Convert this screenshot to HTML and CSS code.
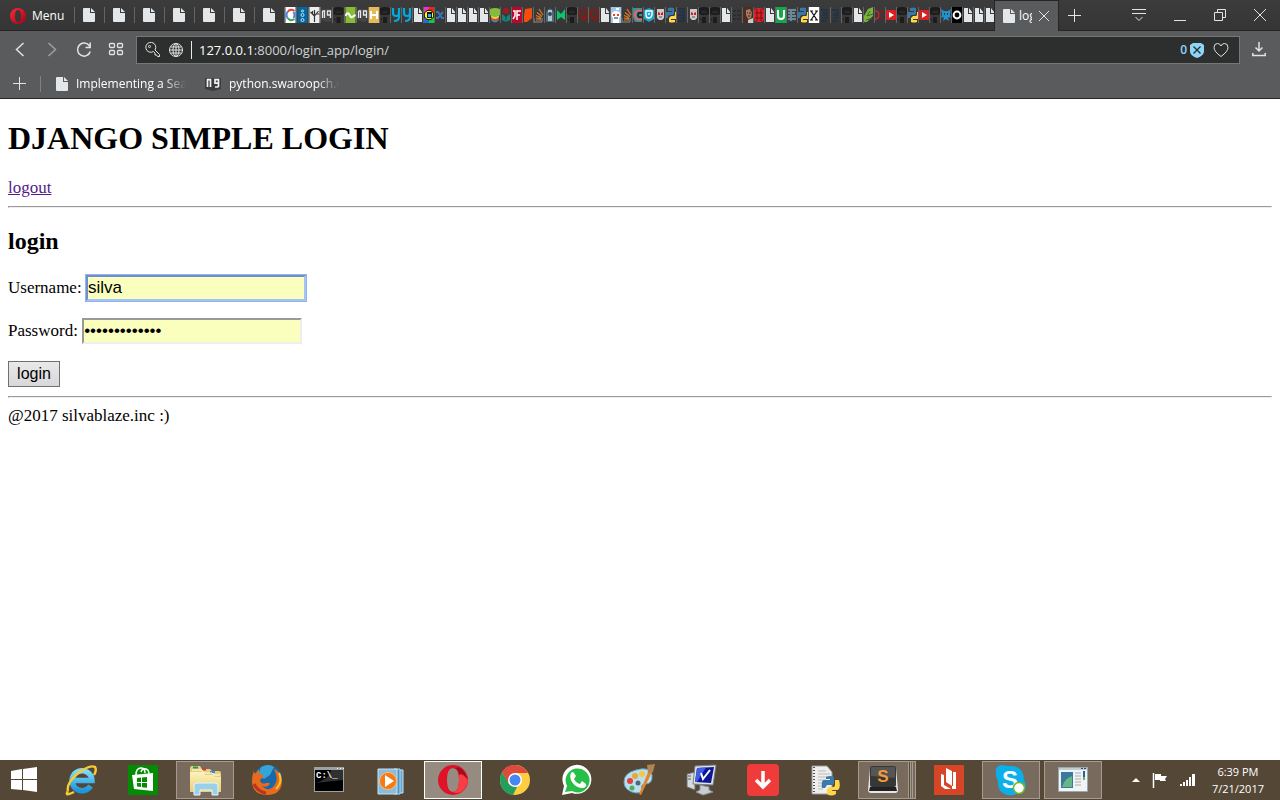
FILE: index.html
```html
<!DOCTYPE html>
<html lang="en">
<head>
<meta charset="utf-8">
<meta name="viewport" content="width=device-width, initial-scale=1">
<title>login</title>
<link rel="stylesheet" href="styles.css">
</head>
<body>
<svg class="sprites" aria-hidden="true">
  <defs>
    <linearGradient id="opera-g" x1="0" y1="0" x2="1" y2="1"><stop offset="0" stop-color="#ff2b3a"/><stop offset="1" stop-color="#a30014"/></linearGradient>
    <linearGradient id="folder-g" x1="0" y1="0" x2="0" y2="1"><stop offset="0" stop-color="#fdf3bd"/><stop offset="1" stop-color="#e9cf74"/></linearGradient>
    <linearGradient id="ie-g" x1="0" y1="0" x2="0" y2="1"><stop offset="0" stop-color="#7fdcfb"/><stop offset="1" stop-color="#1c96dd"/></linearGradient>
  </defs>
  <symbol id="page" viewBox="0 0 12 14"><path d="M1 0h6v5h5v8q0 1-1 1H1q-1 0-1-1V1q0-1 1-1z" fill="#e3e7ea"/><path d="M8 0l4 4H8z" fill="#e3e7ea"/></symbol>
  <symbol id="f-doc" viewBox="0 0 10 16"><path d="M1 1h4v6h4v8H1z" fill="#e3e7ea"/><path d="M6 1l3 4v1H6z" fill="#e3e7ea"/></symbol>
  <symbol id="f-dark" viewBox="0 0 10 16"><path d="M0 1q5-2 10 0v6q-1 1-3 1H3Q1 8 0 7z" fill="#1c1c1d"/><path d="M2 4q3-1 6 0v2q-3 1-6 0z" fill="#29292a"/><path d="M3 10h4v6H3zM0 11l2 1v2z" fill="#1c1c1d"/></symbol>
  <symbol id="f-google" viewBox="0 0 10 16"><path fill="#fff" d="M0 0h10v16H0z"/><path d="M9 4Q5 1 2 5" fill="none" stroke="#e84335" stroke-width="2"/><path d="M2 11q3 4 7 1" fill="none" stroke="#36a852" stroke-width="2"/><path d="M2 5q-2 3 0 6M8 5q2 3 0 6" fill="none" stroke="#4285f4" stroke-width="2"/></symbol>
  <symbol id="f-blue" viewBox="0 0 10 16"><path fill="#07669b" d="M0 0h10v16H0z"/><g fill="none" stroke="#b7e6ff"><circle cx="5" cy="4" r="1"/><circle cx="5" cy="8" r="1.5"/><circle cx="5" cy="13" r="1.5"/></g></symbol>
  <symbol id="f-tree" viewBox="0 0 10 16"><path fill="#eee" d="M0 0h10v16H0z"/><path d="M5 15V8M5 9L1 5M5 9l4-5M5 8V3M3 7V4M7 7h3" fill="none" stroke="#333" stroke-width="1.2"/></symbol>
  <symbol id="f-book" viewBox="0 0 10 16"><path fill="#454545" d="M0 2h10v12l-4 1-6-2z"/><path d="M1 4v7M1 4h2v7M9 11V4H6v4h3" fill="none" stroke="#e7e7e7" stroke-width="1.3"/></symbol>
  <symbol id="f-green" viewBox="0 0 10 16"><path fill="#86bd35" d="M0 0h10v16H0z"/><path d="M0 9q2-5 4-1 2 4 4 1l2-1" fill="none" stroke="#fff" stroke-width="2"/></symbol>
  <symbol id="f-y" viewBox="0 0 10 16"><path d="M2 1v5q0 3 3 3 3 0 3-3V1v9q0 4-5 4" fill="none" stroke="#00a9e0" stroke-width="2.2"/></symbol>
  <symbol id="f-rainbow" viewBox="0 0 10 16"><path fill="#f32dcb" d="M0 0h5v8H0z"/><path fill="#e52525" d="M5 0h5v8H5z"/><path fill="#1c6ce8" d="M0 8h5v8H0z"/><path fill="#14c84b" d="M5 8h5v8H5z"/><circle cx="5" cy="8" r="4.8" fill="#ff0" stroke="#000"/><path fill="#111" d="M3 5h5v6H3z"/><path fill="#3ca2ff" d="M4 7h3v3H4z"/></symbol>
  <symbol id="f-x" viewBox="0 0 10 16"><path d="M1 5h2l4 6h2M1 11h2l5-6" fill="none" stroke="#3a72b8" stroke-width="2"/></symbol>
  <symbol id="f-stackbooks" viewBox="0 0 10 16"><path fill="#2b8fc4" d="M1 11h8v2q-4 5-8 0z"/><path fill="#e0443b" d="M1 9h8v3q-4 4-8 0z"/><path fill="#efd530" d="M1 8h8v2q-4 4-8 0z"/><path fill="#83bd3b" d="M0 2q5-2 10 0v6q-5 4-10 0z"/></symbol>
  <symbol id="f-rose" viewBox="0 0 10 16"><path fill="#188179" d="M1 7l4 3 4-3v6q-4 3-8 0z"/><circle cx="5" cy="4" r="3.2" fill="#a01824"/><path d="M5 6v7" stroke="#17483f"/></symbol>
  <symbol id="f-rr" viewBox="0 0 10 16"><path fill="#b9082f" d="M0 0h10v16H0z"/><path d="M1 4h2v5l-2 3M5 13V4h4M5 8h3" fill="none" stroke="#fff" stroke-width="1.5"/></symbol>
  <symbol id="f-orange" viewBox="0 0 10 16"><path fill="#f64c0c" d="M2 2l7-1v10l-5 4H1V9z"/></symbol>
  <symbol id="f-so" viewBox="0 0 10 16"><path d="M0 11v4h8v-4" fill="none" stroke="#8d8d8d"/><path d="M2 13h5M2 11l5 .6M2 8.500l5 2M3 5.500l5 4M5 2l4 6" fill="none" stroke="#e27a21" stroke-width="1.2"/></symbol>
  <symbol id="f-robot" viewBox="0 0 10 16"><path fill="#486d83" d="M1 5q4-7 8 0v10H1z"/><path fill="#b6c4cc" d="M3 3h4v11H3z"/><circle cx="5" cy="7" r="2" fill="#2e4757"/></symbol>
  <symbol id="f-m" viewBox="0 0 10 16"><path fill="#05c76b" d="M1 3l4 4 4-5v11l-4-3-4 3z"/></symbol>
  <symbol id="f-q" viewBox="0 0 10 16"><ellipse cx="5" cy="7" rx="3.4" ry="4.6" fill="none" stroke="#8e170f" stroke-width="1.8"/><path d="M4 9q3 0 3 4h2" fill="none" stroke="#8e170f" stroke-width="1.5"/></symbol>
  <symbol id="f-reddit" viewBox="0 0 10 16"><path fill="#9cc8ee" d="M0 0h10v16H0z"/><ellipse cx="5" cy="8" rx="4.5" ry="4" fill="#fff"/><path fill="#fff" d="M2 11h6v5H2zM5 1h3v2H5z"/><path fill="#f33d16" d="M2 7h2v2H2zM6 7h2v2H6z"/><path d="M3 11h4" stroke="#222"/></symbol>
  <symbol id="f-c" viewBox="0 0 10 16"><path fill="#408da0" d="M0 1h9v14H2q-3-4-2-14z"/><path d="M9 4Q2 2 2 8t7 4" fill="none" stroke="#e26b59" stroke-width="2"/><path d="M9 6Q5 5 5 8t4 2" fill="none" stroke="#252525" stroke-width="2"/></symbol>
  <symbol id="f-hex" viewBox="0 0 10 16"><path fill="#1aa5cc" d="M0 3l5-2 5 2v9l-5 3-5-3z"/><path d="M2 4h6v4q-1 3-3 3-3 0-3-3zM4 7h2" fill="none" stroke="#fff" stroke-width="1.4"/></symbol>
  <symbol id="f-face" viewBox="0 0 10 16"><path fill="#cacaca" d="M2 2h7v9l-2 2H4l-2-2z"/><path fill="#db1822" d="M3 5l2 1v2H3zM8 5L6 6v2h2z"/><path d="M4 10h3" stroke="#555"/></symbol>
  <symbol id="f-python" viewBox="0 0 10 16"><path fill="#3877aa" d="M2 1q3-1 6 0v6L7 8H4q-2 0-2 3H0V5h6V4H2z"/><path fill="#ffd747" d="M9 5h1v7H5v1h4v2q-3 1-6 0v-4l2-2h3l1-1z"/></symbol>
  <symbol id="f-navy" viewBox="0 0 10 16"><path d="M1 2h6M2 5h6M1 8h6M2 11h6M1 14h6M7 1v14" stroke="#1e304e" stroke-width="1.4"/></symbol>
  <symbol id="f-faint" viewBox="0 0 10 16"><path d="M1 4h3M5 4h4M1 8h3M5 8h4M1 12h3M5 12h4" stroke="#292f31" stroke-width="2"/></symbol>
  <symbol id="f-photo" viewBox="0 0 10 16"><path fill="#4a2c22" d="M0 0h10v16H0z"/><path fill="#a87a5e" d="M3 3l4-1 2 4-1 5-3 1-2-4z"/><path fill="#c9c9c9" d="M5 13l5-2v5H5z"/><path d="M4 6h1M6 6h2M5 9h2" stroke="#3f211a"/></symbol>
  <symbol id="f-red" viewBox="0 0 10 16"><rect x="0" y="1" width="10" height="14" rx="4" fill="#e32028"/><path d="M3 2v12M7 2v12M1 6h8M1 11h8" stroke="#6d1519"/></symbol>
  <symbol id="f-u" viewBox="0 0 10 16"><path fill="#16a74b" d="M0 0h10v16H0z"/><path d="M2 3v6q0 3 3 3t3-3V3" fill="none" stroke="#fff" stroke-width="2"/></symbol>
  <symbol id="f-lines" viewBox="0 0 10 16"><path fill="#2d4351" d="M0 1h9v14H0z"/><path d="M1 3h2M1 6h2M1 9h2M1 12h2M5 3h4M5 6h3M5 9h4M5 12h4M4 2v12" stroke="#b8cbd5"/></symbol>
  <symbol id="f-xw" viewBox="0 0 10 16"><path fill="#fff" d="M0 0h10v16H0z"/><path d="M2 4l6 9M8 4l-6 9M1 4h3M6 4h3M1 13h3M6 13h3" stroke="#111" stroke-width="1.2"/></symbol>
  <symbol id="f-bluelines" viewBox="0 0 10 16"><path d="M1 3h6v3H3M2 8h5v3H2M1 14h6" fill="none" stroke="#1d3548" stroke-width="1.4"/></symbol>
  <symbol id="f-leaf" viewBox="0 0 10 16"><path fill="#7ab23b" d="M9 0v9l-6 6H0V9l4-7z"/><path d="M9 7L3 9l3-5M2 13l6-2" fill="none" stroke="#3e672d"/></symbol>
  <symbol id="f-cross" viewBox="0 0 10 16"><path d="M0 4q4 0 4 4t-4 4" fill="none" stroke="#d0222b" stroke-width="1.6"/><path d="M9 4Q5 4 5 8t4 4" fill="none" stroke="#792127" stroke-width="1.3"/></symbol>
  <symbol id="f-yt" viewBox="0 0 10 16"><rect x="0" y="3" width="10" height="10" rx="1" fill="#d91f22"/><path fill="#fff" d="M3 5l5 3-5 3z"/></symbol>
  <symbol id="f-fox" viewBox="0 0 10 16"><path fill="#2391ce" d="M0 2l3 2h4l3-2-1 6 1 3-3-1 1 4-3-2-3 2 1-4-3 1 1-3z"/><path fill="#153e58" d="M3 6h1v2H3zM6 6h1v2H6z"/></symbol>
  <symbol id="f-o" viewBox="0 0 10 16"><path fill="#000" d="M0 0h10v16H0z"/><circle cx="5" cy="8" r="3.4" fill="none" stroke="#fff" stroke-width="2"/></symbol>
</svg>

<header class="browser">
  <nav class="tabs" aria-label="Tabs">
    <button class="menu"><svg width="16" height="16" viewBox="0 0 16 16"><path fill-rule="evenodd" fill="url(#opera-g)" d="M8 0a8 8 0 100 16A8 8 0 008 0zm0 2q3 0 3 6t-3 6-3-6 3-6z"/></svg>Menu</button>
    <button class="tab" aria-label="Tab"><svg width="12" height="14"><use href="#page"/></svg></button>
    <button class="tab" aria-label="Tab"><svg width="12" height="14"><use href="#page"/></svg></button>
    <button class="tab" aria-label="Tab"><svg width="12" height="14"><use href="#page"/></svg></button>
    <button class="tab" aria-label="Tab"><svg width="12" height="14"><use href="#page"/></svg></button>
    <button class="tab" aria-label="Tab"><svg width="12" height="14"><use href="#page"/></svg></button>
    <button class="tab" aria-label="Tab"><svg width="12" height="14"><use href="#page"/></svg></button>
    <button class="tab" aria-label="Tab"><svg width="12" height="14"><use href="#page"/></svg></button>
    <button class="mini wide" aria-label="Tab"><svg><use href="#f-google"/></svg></button>
    <button class="mini wide" aria-label="Tab"><svg><use href="#f-blue"/></svg></button>
    <button class="mini wide" aria-label="Tab"><svg><use href="#f-tree"/></svg></button>
    <button class="mini wide" aria-label="Tab"><svg><use href="#f-book"/></svg></button>
    <button class="mini wide" aria-label="Tab"><svg><use href="#f-dark"/></svg></button>
    <button class="mini wide" aria-label="Tab"><svg><use href="#f-green"/></svg></button>
    <button class="mini wide" aria-label="Tab"><svg><use href="#f-book"/></svg></button>
    <button class="mini" aria-label="Tab"><svg viewBox="0 0 10 16"><path fill="#e8b955" d="M0 0h10v16H0z"/><path d="M2 4v8M8 4v8M2 8h6" stroke="#fff" stroke-width="2"/></svg></button>
    <button class="mini" aria-label="Tab"><svg><use href="#f-dark"/></svg></button>
    <button class="mini" aria-label="Tab"><svg><use href="#f-y"/></svg></button>
    <button class="mini" aria-label="Tab"><svg><use href="#f-y"/></svg></button>
    <button class="mini" aria-label="Tab"><svg><use href="#f-doc"/></svg></button>
    <button class="mini" aria-label="Tab"><svg><use href="#f-rainbow"/></svg></button>
    <button class="mini" aria-label="Tab"><svg><use href="#f-x"/></svg></button>
    <button class="mini" aria-label="Tab"><svg><use href="#f-doc"/></svg></button>
    <button class="mini" aria-label="Tab"><svg><use href="#f-doc"/></svg></button>
    <button class="mini" aria-label="Tab"><svg><use href="#f-doc"/></svg></button>
    <button class="mini" aria-label="Tab"><svg><use href="#f-doc"/></svg></button>
    <button class="mini" aria-label="Tab"><svg><use href="#f-stackbooks"/></svg></button>
    <button class="mini" aria-label="Tab"><svg><use href="#f-rose"/></svg></button>
    <button class="mini" aria-label="Tab"><svg><use href="#f-rr"/></svg></button>
    <button class="mini" aria-label="Tab"><svg><use href="#f-orange"/></svg></button>
    <button class="mini" aria-label="Tab"><svg><use href="#f-so"/></svg></button>
    <button class="mini" aria-label="Tab"><svg><use href="#f-robot"/></svg></button>
    <button class="mini" aria-label="Tab"><svg><use href="#f-m"/></svg></button>
    <button class="mini" aria-label="Tab"><svg><use href="#f-dark"/></svg></button>
    <button class="mini" aria-label="Tab"><svg><use href="#f-q"/></svg></button>
    <button class="mini" aria-label="Tab"><svg><use href="#f-q"/></svg></button>
    <button class="mini" aria-label="Tab"><svg><use href="#f-doc"/></svg></button>
    <button class="mini" aria-label="Tab"><svg><use href="#f-reddit"/></svg></button>
    <button class="mini" aria-label="Tab"><svg><use href="#f-so"/></svg></button>
    <button class="mini" aria-label="Tab"><svg><use href="#f-c"/></svg></button>
    <button class="mini" aria-label="Tab"><svg><use href="#f-hex"/></svg></button>
    <button class="mini" aria-label="Tab"><svg><use href="#f-face"/></svg></button>
    <button class="mini" aria-label="Tab"><svg><use href="#f-python"/></svg></button>
    <button class="mini" aria-label="Tab"><svg><use href="#f-navy"/></svg></button>
    <button class="mini" aria-label="Tab"><svg><use href="#f-face"/></svg></button>
    <button class="mini" aria-label="Tab"><svg><use href="#f-dark"/></svg></button>
    <button class="mini" aria-label="Tab"><svg><use href="#f-dark"/></svg></button>
    <button class="mini" aria-label="Tab"><svg><use href="#f-doc"/></svg></button>
    <button class="mini" aria-label="Tab"><svg><use href="#f-faint"/></svg></button>
    <button class="mini" aria-label="Tab"><svg><use href="#f-photo"/></svg></button>
    <button class="mini" aria-label="Tab"><svg><use href="#f-red"/></svg></button>
    <button class="mini" aria-label="Tab"><svg><use href="#f-doc"/></svg></button>
    <button class="mini" aria-label="Tab"><svg><use href="#f-u"/></svg></button>
    <button class="mini" aria-label="Tab"><svg><use href="#f-lines"/></svg></button>
    <button class="mini" aria-label="Tab"><svg><use href="#f-python"/></svg></button>
    <button class="mini" aria-label="Tab"><svg><use href="#f-xw"/></svg></button>
    <button class="mini" aria-label="Tab"><svg><use href="#f-bluelines"/></svg></button>
    <button class="mini" aria-label="Tab"><svg><use href="#f-bluelines"/></svg></button>
    <button class="mini" aria-label="Tab"><svg><use href="#f-dark"/></svg></button>
    <button class="mini" aria-label="Tab"><svg><use href="#f-doc"/></svg></button>
    <button class="mini" aria-label="Tab"><svg><use href="#f-leaf"/></svg></button>
    <button class="mini" aria-label="Tab"><svg><use href="#f-cross"/></svg></button>
    <button class="mini" aria-label="Tab"><svg><use href="#f-yt"/></svg></button>
    <button class="mini" aria-label="Tab"><svg><use href="#f-dark"/></svg></button>
    <button class="mini" aria-label="Tab"><svg><use href="#f-python"/></svg></button>
    <button class="mini" aria-label="Tab"><svg><use href="#f-yt"/></svg></button>
    <button class="mini" aria-label="Tab"><svg><use href="#f-dark"/></svg></button>
    <button class="mini" aria-label="Tab"><svg><use href="#f-fox"/></svg></button>
    <button class="mini" aria-label="Tab"><svg><use href="#f-o"/></svg></button>
    <button class="mini" aria-label="Tab"><svg><use href="#f-doc"/></svg></button>
    <button class="mini" aria-label="Tab"><svg><use href="#f-doc"/></svg></button>
    <button class="mini" aria-label="Tab"><svg><use href="#f-doc"/></svg></button>
    <div class="tab-active">
      <svg width="12" height="14"><use href="#page"/></svg><span class="tab-title">login</span>
      <button class="icon close" aria-label="Close tab"><svg width="10" height="10" viewBox="0 0 10 10"><path d="M0 0l10 10M10 0L0 10"/></svg></button>
    </div>
    <button class="icon new-tab" aria-label="New tab"><svg width="13" height="13" viewBox="0 0 13 13"><path d="M6.500 0v13M0 6.500h13"/></svg></button>
    <div class="window-controls">
      <button class="icon" aria-label="Tab menu"><svg width="14" height="14" viewBox="0 0 14 14"><path d="M0 1.500h14M0 5.500h14M3.500 9L7 12.500 10.500 9"/></svg></button>
      <button class="icon" aria-label="Minimize"><svg width="12" height="14" viewBox="0 0 12 14"><path d="M0 12.500h12"/></svg></button>
      <button class="icon" aria-label="Restore"><svg width="12" height="12" viewBox="0 0 12 12"><path d="M.5 3.500h8v8h-8zM3.500 3.500v-3h8v8h-3"/></svg></button>
      <button class="icon" aria-label="Close"><svg width="12" height="12" viewBox="0 0 12 12"><path d="M0 0l12 12M12 0L0 12"/></svg></button>
    </div>
  </nav>

  <div class="toolbar">
    <div class="nav-buttons">
      <button class="icon" aria-label="Back"><svg width="16" height="16" viewBox="0 0 16 16"><path d="M11.500 1L4.500 7.500l7 6.500" stroke-width="1.500"/></svg></button>
      <button class="icon dim" aria-label="Forward"><svg width="16" height="16" viewBox="0 0 16 16"><path d="M4.500 1l7 6.500-7 6.500" stroke-width="1.500"/></svg></button>
      <button class="icon" aria-label="Reload"><svg width="16" height="16" viewBox="0 0 16 16"><path d="M13.500 4a6.500 6.500 0 10.800 5.500M14.200 .5v5H9.500" stroke-width="1.500"/></svg></button>
      <button class="icon" aria-label="Speed dial"><svg width="16" height="16" viewBox="0 0 16 16"><g stroke-width="1.300"><rect x="1.500" y="1.500" width="5" height="4" rx="1"/><rect x="9.500" y="1.500" width="5" height="4" rx="1"/><rect x="1.500" y="8.500" width="5" height="4" rx="1"/><rect x="9.500" y="8.500" width="5" height="4" rx="1"/></g></svg></button>
    </div>
    <div class="address">
      <svg class="line" width="16" height="16" viewBox="0 0 16 16"><path d="M8.500 9.500a5 5 0 111.500-1.500l4.500 4.500v2h-2l-1-1.500h-1.500v-2z"/><circle cx="4.500" cy="4.500" r="1"/></svg>
      <svg class="line" width="16" height="16" viewBox="0 0 16 16"><circle cx="8" cy="8" r="6.500"/><ellipse cx="8" cy="8" rx="3" ry="6.500"/><path d="M8 1.500v13M1.500 8h13M2.500 5h11M2.500 11h11"/></svg>
      <span class="address-sep"></span>
      <a class="url" href="#"><strong>127.0.0.1</strong>:8000/login_app/login/</a>
      <span class="blocked">0</span>
      <svg width="14" height="16" viewBox="0 0 14 16"><path fill="#8fd5f8" d="M3 1h8l3 2v7q-1 4-7 6-6-2-7-6V3z"/><path d="M3.500 4.500l7 7M10.500 4.500l-7 7" stroke="#26323a" stroke-width="1.400"/></svg>
      <button class="icon heart" aria-label="Bookmark"><svg width="16" height="16" viewBox="0 0 16 16"><path d="M8 14.500Q1 9.500 1 5.500q0-4 3.500-4Q7 1.500 8 4q1-2.500 3.500-2.500Q15 1.500 15 5.500q0 4-7 9z"/></svg></button>
    </div>
    <button class="icon download" aria-label="Downloads"><svg width="14" height="16" viewBox="0 0 14 16"><path d="M7 0v9M3.500 5.500L7 9l3.500-3.500M.8 11v2.500h12.400V11" stroke-width="1.500"/></svg></button>
  </div>

  <nav class="bookmarks" aria-label="Bookmarks">
    <button class="icon" aria-label="Add bookmark"><svg width="14" height="14" viewBox="0 0 14 14"><path d="M6.500 0v13M0 6.500h13"/></svg></button>
    <span class="bookmark-sep"></span>
    <a class="bookmark" href="#"><svg width="12" height="14"><use href="#page"/></svg><span>Implementing a Search</span></a>
    <a class="bookmark" href="#"><svg width="16" height="14" viewBox="0 0 16 14"><path fill="#3c3c3c" d="M0 1h16v11l-8 2-8-2z"/><path d="M2.500 2v8M2 2.700h3.500V10M13.500 10V2.700H10v3.500h3.500M10 10h3.500" fill="none" stroke="#f1f1f1" stroke-width="1.700"/></svg><span>python.swaroopch.com</span></a>
  </nav>
</header>

<main class="page">
  <h1>DJANGO SIMPLE LOGIN</h1>
  <a class="logout" href="#">logout</a>
  <hr>
  <h2>login</h2>
  <form>
    <p><label for="username">Username:</label> <input class="field focused" id="username" type="text" value="silva"></p>
    <p><label for="password">Password:</label> <input class="field" id="password" type="password" value="password12345"></p>
    <button class="submit" type="button">login</button>
  </form>
  <hr>
  @2017 silvablaze.inc :)
</main>

<footer class="taskbar">
  <button class="start" aria-label="Start"><svg width="28" height="26" viewBox="0 0 28 26"><path fill="#fff" d="M1 4l11-2v10H1zM13 2l14-2v12H13zM1 13h11v10L1 22zM13 13h14v12l-14-2z"/></svg></button>
  <button class="task" aria-label="Internet Explorer"><svg viewBox="0 0 32 32"><path d="M25.500 22A10 10 0 1127 16.500H9" fill="none" stroke="url(#ie-g)" stroke-width="5.500"/><path d="M3 27Q-1 33 9 28M3 27Q1 20 12 10 25 0 30 3q2 3-1 8" fill="none" stroke="#f8cb32" stroke-width="2.400"/></svg></button>
  <button class="task" aria-label="Store"><svg viewBox="0 0 32 32"><path fill="#038c03" d="M1 1h30v30H1z"/><path d="M9 11q0-7 5-7 4 0 4 5M14 8q1-4 5-3 3 1 3 5" fill="none" stroke="#fff" stroke-width="1.500"/><path fill="#fff" d="M5 11l21-2v18L7 25z"/><path fill="#038c03" d="M10 14l4-.4V18h-4zM15 13.500l5-.5v5h-5zM10 19h4v4l-4-.4zM15 19h5v4.700l-5-.5z"/></svg></button>
  <button class="task open" aria-label="File Explorer"><svg viewBox="0 0 32 32"><path fill="#e6ce7b" d="M1 4q0-2 2-2h8l2 3h8l2 2h7q2 0 2 2v19H1z"/><path d="M4 3.500h5" stroke="#239d39" stroke-width="2"/><path d="M13 5.500h4" stroke="#d23b28" stroke-width="2"/><path d="M21 8h5" stroke="#2993dc" stroke-width="2"/><path d="M3 6h10l2 3h8l2 2h6" fill="none" stroke="#fff"/><path fill="url(#folder-g)" d="M1 8h13l2 3h8l2 2h6v15H1z"/><path fill="#9bd1e8" stroke="#e6f7fc" d="M5 31V22q0-3 3-3h18q3 0 3 3v9h-6v-5H11v5z"/></svg></button>
  <button class="task" aria-label="Firefox"><svg viewBox="0 0 32 32"><circle cx="17" cy="15" r="14" fill="#1769a9"/><path fill="#36a4d8" d="M10 3q8-4 13 0l-4 8-6 4-6-4z"/><path fill="#e76a1d" d="M3 7l1 3 4-5v5q4 0 5 2l-4 4q1 5 6 3 3-1 4 1-3 4-8 2 5 6 11 1 5-5 3-13l-2-5q7 3 8 11 0 15-15 15Q2 31 1 18q0-7 2-11z"/><path d="M28 9q4 9-3 16" fill="none" stroke="#fbc72f" stroke-width="2"/><path d="M3 20q4 8 12 9" fill="none" stroke="#bb3420" stroke-width="3"/></svg></button>
  <button class="task" aria-label="Command Prompt"><svg viewBox="0 0 32 32"><path fill="#9ba1a4" d="M1 3h30v25H1z"/><path fill="#000" d="M2 6h28v21H2z"/><path fill="#303030" d="M18 6h12v10L2 19q15-4 16-13z"/><path d="M24 4.500h1M27 4.500h1M30 4.500h1" stroke="#fff"/><text x="3" y="14" font-size="9" fill="#fff" class="console">C:\_</text></svg></button>
  <button class="task" aria-label="Media Player"><svg viewBox="0 0 32 32"><path fill="#65a7d3" stroke="#c3e3f3" d="M21 6h7v23h-7z"/><path fill="#4b93c4" stroke="#b5d9ee" d="M19 5h6v25h-6z"/><path fill="#8dbcda" stroke="#c3e3f3" d="M3 5h19v25H3z"/><circle cx="13" cy="17" r="8.500" fill="#f37a14" stroke="#fbbd78"/><path fill="#fff" d="M10 11l9 6-9 6z"/></svg></button>
  <button class="task open current" aria-label="Opera"><svg viewBox="0 0 32 32"><path fill="#df1228" fill-rule="evenodd" d="M16 1a15 15 0 100 30 15 15 0 000-30zm0 3q6 0 6 12t-6 12-6-12 6-12z"/><path fill="#fa3d45" d="M16 28q6 0 6-12T16 4q6-2 10 2 5 4 5 10-1 8-7 12-5 2-8 0z"/><path fill="#a60a1c" d="M16 4q6-2 9 1 5 5 6 11-6-8-9-5Q21 4 16 4z"/></svg></button>
  <button class="task" aria-label="Chrome"><svg viewBox="0 0 32 32"><circle cx="16" cy="16" r="15" fill="#ffcd42"/><path fill="#dc4b3d" d="M3 8A15 15 0 0129 9H16l-7 10z"/><path fill="#249f5b" d="M3 8l7 12 8 3-4 8Q1 29 1 16q0-5 2-8z"/><circle cx="16" cy="16" r="7" fill="#fff"/><circle cx="16" cy="16" r="5.500" fill="#4688f1"/></svg></button>
  <button class="task" aria-label="WhatsApp"><svg viewBox="0 0 32 32"><path fill="#fff" d="M1 31l2-9a14.500 14.500 0 118 7z"/><path fill="#27bf47" d="M4 28l2-6a12 12 0 115 5z"/><path fill="#fff" d="M10 9q2-2 3 0l2 3-2 3q2 4 6 5l2-3 4 3q1 3-3 4-7 0-11-6-3-5-1-9z"/></svg></button>
  <button class="task" aria-label="Paint"><svg viewBox="0 0 32 32"><path fill="#b9def0" stroke="#5fa4c6" d="M13 6q14-4 16 5 1 9-7 9-5 1-3 5 0 4-6 4Q1 27 1 18T13 6z"/><circle cx="12" cy="12" r="3" fill="#e8a92c"/><circle cx="19" cy="10" r="3" fill="#f7c73c"/><circle cx="7" cy="17" r="3" fill="#e53d39"/><circle cx="9" cy="24" r="2.500" fill="#4fae55"/><circle cx="15" cy="19" r="2.500" fill="#526879"/><path fill="#e88425" d="M26 6l3 2-11 23-2-1z"/><path fill="#b18452" d="M24 1l8-1-2 8-5 1z"/></svg></button>
  <button class="task" aria-label="Computer"><svg viewBox="0 0 32 32"><path fill="#d5dadc" stroke="#646c71" d="M2 10l8-2v18l-8-3z"/><path d="M3 12h3M3 15h3" stroke="#525b60"/><path fill="#c8cdd0" stroke="#8a9296" d="M15 21l9 2v3l4 2-10 3-7-3 4-2z"/><path fill="#e1e4e6" stroke="#788188" d="M10 2l21-1-3 20-20-1z"/><path fill="#0b1796" d="M12 4l17-1-3 16-16-1z"/><path fill="#425de2" d="M12 4l9-.5L12 18h-2z"/><path d="M16 9l2 6 7-9" fill="none" stroke="#fff" stroke-width="2"/></svg></button>
  <button class="task" aria-label="Downloader"><svg viewBox="0 0 32 32"><rect width="32" height="32" rx="4" fill="#f03b3b"/><path d="M16 7v16M9 16l7 7 7-7" fill="none" stroke="#fff" stroke-width="3.500"/></svg></button>
  <button class="task" aria-label="Python"><svg viewBox="0 0 32 32"><path fill="#eee" stroke="#999" d="M3 2h15l5 6v22H3z"/><path d="M5 3v26" stroke="#555" stroke-width="2" stroke-dasharray="1 2"/><path d="M9 7h8M9 10h12M9 13h10M9 16h8M9 19h5M9 22h5M9 25h5" stroke="#bbb"/><path fill="#3979ac" d="M17 13q4-2 8 0v7l-2 1h-5l-2 3h-3q-1-8 2-8h6v-1h-4z"/><path fill="#ffd746" d="M26 16h4q2 8-1 10h-6v1h4v3q-5 3-9 0v-5l2-2h5l1-2z"/></svg></button>
  <button class="task open stacked" aria-label="Sublime Text"><svg viewBox="0 0 32 32"><path fill="#e5e5e5" d="M3 4l-2 22q0 3 3 3h24q3 0 3-3L29 4z"/><path fill="#222" d="M3 23h26l1 4H2z"/><rect x="3" y="2" width="26" height="21" rx="2" fill="#373737"/><path fill="#555" d="M4 3h24v11L4 12z"/><text x="16" y="18" font-size="17" fill="#f49a38">S</text></svg></button>
  <button class="task" aria-label="Reader"><svg viewBox="0 0 32 32"><path fill="#d64526" d="M1 1h30v30H1z"/><path fill="#fff" d="M8 10l3 1v10l7 4H12l-4-3zM13 4l6 3v15l-6-4zM20 8h3v17h-4v-3h1z"/></svg></button>
  <button class="task open" aria-label="Skype"><svg viewBox="0 0 32 32"><path fill="#0bafe9" d="M1 8q-1-7 7-7l4 1h5q12 1 12 14 3 4 1 9-3 6-8 5-5 2-10 1Q2 28 3 17 0 12 1 8z"/><text x="15" y="24" font-size="24" fill="#fff">S</text><circle cx="24" cy="24" r="5.500" fill="#fff" stroke="#72b928" stroke-width="1.500"/></svg></button>
  <button class="task open" aria-label="Program"><svg viewBox="0 0 32 32"><path fill="#f1f4f5" stroke="#9ca8b0" d="M1.500 3.500h29v24h-29z"/><path fill="#c1cdd5" d="M2 4h28v2H2z"/><path d="M24 4.500h2M27 4.500h2" stroke="#314764"/><path fill="#3b789b" d="M4 8h12v16H4z"/><path fill="#65b785" d="M5 23q3-9 10-11v11H5z"/><path d="M18 9h6M18 12h6M18 15h6M18 18h6M18 21h6" stroke="#aaa"/><path fill="#2c5e9c" d="M26 7h2v8h-2z"/><path fill="#68b557" d="M26 13h2v3h-2z"/></svg></button>
  <div class="tray">
    <svg width="8" height="5" viewBox="0 0 8 5"><path fill="#fff" d="M4 0l4 4H0z"/></svg>
    <svg width="16" height="16" viewBox="0 0 16 16"><path d="M1.500 1v15" stroke="#fff" stroke-width="1.500"/><path fill="#fff" d="M3 2h6v2h6l-2 3 1 2H8V8H3z"/></svg>
    <svg width="16" height="14" viewBox="0 0 16 14"><path fill="#fff" d="M0 11h2v2H0zM3 9h2v4H3zM6 7h2v6H6zM9 4h2v9H9zM12 1h3v12h-3z"/></svg>
    <time class="clock"><span>6:39 PM</span><span>7/21/2017</span></time>
  </div>
</footer>
</body>
</html>
```

FILE: styles.css
```css
* { box-sizing: border-box; }

body {
  margin: 0;
  min-height: 100vh;
  display: flex;
  flex-direction: column;
  background: #fff;
  font-family: "Liberation Serif", serif;
  font-size: 17px;
  line-height: 20px;
  color: #000;
}

button { font: inherit; color: inherit; border: 0; padding: 0; background: none; }
svg { display: block; flex: none; }
.sprites { position: absolute; width: 0; height: 0; }
.task text { font-family: "Liberation Sans", sans-serif; font-weight: bold; text-anchor: middle; }
.task .console { font-family: "Liberation Mono", monospace; text-anchor: start; }

/* Browser frame */
.browser {
  background: #5a5b5d;
  border-bottom: 1px solid #242526;
  color: #fff;
  font-family: "Open Sans", "Noto Sans", sans-serif;
  font-size: 12px;
}
.tabs {
  display: flex;
  align-items: center;
  height: 31px;
  background: linear-gradient(#3c3c3c, #353535);
  border-bottom: 1px solid #262626;
}
.menu { display: flex; align-items: center; gap: 6px; width: 74px; padding-left: 10px; padding-top: 2px; }
.tab { width: 30px; height: 16px; border-left: 1px solid #656565; padding-left: 8px; }
.mini { width: 11px; height: 16px; border-left: 1px solid #656565; }
.mini.wide { width: 12px; }
.mini svg { width: 10px; height: 16px; }
.mini.wide svg { width: 11px; }
.tab-active {
  display: flex;
  align-items: center;
  align-self: stretch;
  width: 65px;
  padding-left: 8px;
  margin-bottom: -1px;
  margin-left: -1px;
  background: #5a5b5d;
  border: 1px solid #262626;
  border-bottom: 0;
}
.tab-title { width: 13px; margin-left: 4px; overflow: hidden; }
.close { margin-left: 7px; }
.new-tab { margin-left: 9px; }
.icon svg, .line { fill: none; stroke: #e1e3e4; }
.dim { opacity: 0.5; }
.window-controls { display: flex; align-items: center; gap: 28px; margin-left: auto; padding-right: 14px; }

.toolbar { display: flex; align-items: center; height: 38px; padding: 0 14px 0 12px; }
.nav-buttons { display: flex; gap: 16px; width: 124px; }
.address {
  flex: 1;
  display: flex;
  align-items: center;
  gap: 7px;
  height: 28px;
  padding: 0 10px 0 8px;
  background: #2d2f2f;
  border: 1px solid #747677;
}
.address-sep { width: 1px; height: 18px; background: #e8e8e8; }
.url { flex: 1; color: #d0d2d2; font-size: 13px; text-decoration: none; }
.url strong { color: #fff; font-weight: normal; }
.blocked { color: #8fd5f8; font-weight: 600; margin-right: -4px; }
.heart { margin-left: 2px; }
.download { margin-left: 12px; }

.bookmarks { display: flex; align-items: center; height: 29px; padding-left: 13px; }
.bookmark-sep { width: 1px; height: 16px; margin: 0 15px 0 13px; background: #808183; }
.bookmark { display: flex; align-items: center; gap: 8px; margin-right: 19px; color: #fff; text-decoration: none; }
.bookmark span {
  width: 110px;
  overflow: hidden;
  white-space: nowrap;
  -webkit-mask-image: linear-gradient(to right, #000 80%, transparent);
  mask-image: linear-gradient(to right, #000 80%, transparent);
}

/* Login page */
.page { flex: 1; padding: 0 8px; }
h1 { margin: 21px 0; font-size: 32px; line-height: 37px; }
h2 { margin: 20px 0; font-size: 24px; line-height: 27px; }
hr { margin: 8px 0; border: 1px solid; border-color: #9a9a9a #eee #eee #9a9a9a; }
.logout { color: #551a8b; }
form { margin-bottom: 9px; }
p { margin: 0 0 17px; }
.field {
  width: 220px;
  height: 26px;
  padding: 1px 0;
  font: 17px "Liberation Sans", sans-serif;
  color: #000;
  background: #faffbd;
  border: 2px solid;
  border-color: #9a9a9a #eee #eee #9a9a9a;
  outline: none;
}
.field.focused { box-shadow: 0 0 0 1px #91b4f0; border-color: #6f8fd0 #a6c3f8 #a6c3f8 #6f8fd0; }
.submit {
  display: block;
  width: 52px;
  height: 26px;
  font: 16px "Liberation Sans", sans-serif;
  color: #000;
  background: linear-gradient(#e9e9e9, #d8d8d8);
  border: 1px solid #707070;
}

/* Taskbar */
.taskbar { display: flex; align-items: center; gap: 4px; height: 40px; background: #554736; color: #fff; }
.start { display: flex; justify-content: center; width: 48px; }
.task { display: flex; align-items: center; justify-content: center; width: 58px; height: 38px; border: 1px solid transparent; }
.task svg { width: 32px; height: 32px; }
.open { background: #786b5e; border-color: #a59b90; }
.current { background: #958b80; border-color: #fff; }
.stacked { padding-right: 8px; background: linear-gradient(to right, #786b5e 49px, #a59b90 49px 50px, #554736 50px 51px, #a59b90 51px 52px, #786b5e 52px 53px, #a59b90 53px 54px, #786b5e 54px); }
.tray {
  display: flex;
  align-items: center;
  gap: 12px;
  margin-left: auto;
  padding-right: 16px;
  font-family: "Open Sans", "Noto Sans", sans-serif;
  font-size: 11px;
}
.clock { display: flex; flex-direction: column; align-items: center; margin-left: 4px; line-height: 17px; }
```
